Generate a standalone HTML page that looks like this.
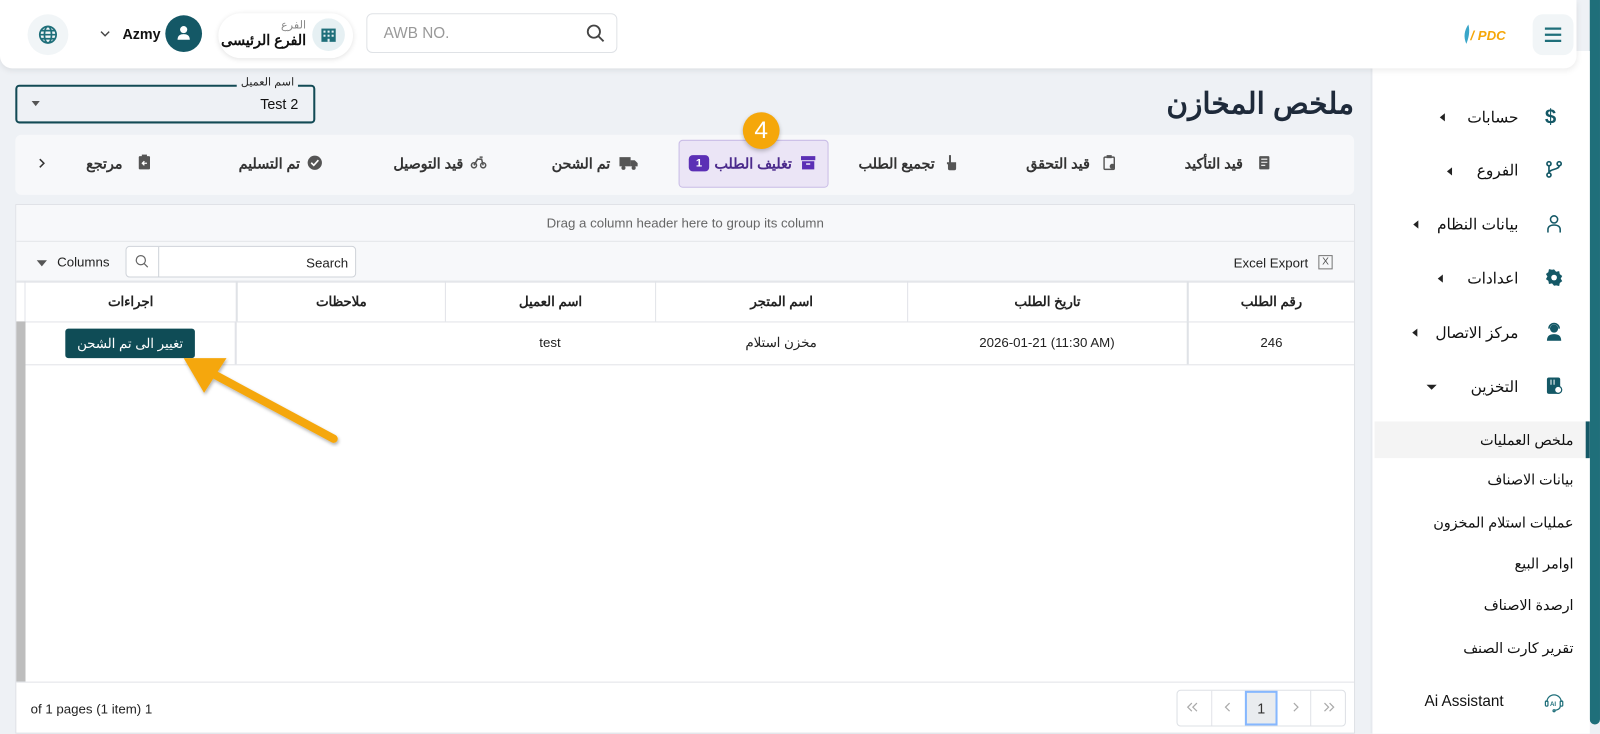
<!DOCTYPE html>
<html><head><meta charset="utf-8">
<style>
*{box-sizing:border-box;margin:0;padding:0}
html,body{width:1600px;height:734px;overflow:hidden;background:#eef1f5}
body{font-family:"Liberation Sans","Noto Sans CJK SC",sans-serif;color:#222}
#w{position:absolute;left:0;top:0;width:1568px;height:719px;transform:scale(1.0204);transform-origin:0 0;background:#eef1f5}
.a{position:absolute}
.ar{direction:rtl;white-space:nowrap}
.hdr{left:0;top:0;width:1545px;height:67px;background:#fff;border-radius:0 0 12px 12px;box-shadow:0 2px 6px rgba(0,0,0,.08);z-index:3}
.side{left:1343px;top:50px;width:215px;height:669px;background:#fff}
.strip{left:1558px;top:0;width:10px;height:710px;background:#1f6f7a;border-radius:0 0 5px 5px}
.si{right:80px;font-size:15px;color:#111}
.sic{left:1514px;width:18px;height:18px}
.tri{width:0;height:0;border-top:4px solid transparent;border-bottom:4px solid transparent;border-right:5px solid #222}
.sub{right:26px;font-size:14px;color:#111}
.tab{font-size:14px;font-weight:bold;color:#333;top:152px}
.th{top:276px;height:39px;font-size:13px;font-weight:bold;text-align:center;line-height:39px;border-left:1px solid #e1e3e8;color:#222}
.td{top:315px;height:42px;font-size:13px;text-align:center;line-height:42px;color:#222}
</style></head><body><div id="w">

<div class="a strip"></div>
<div class="a side"></div>
<div class="a" style="left:1343px;top:67px;width:2px;height:652px;background:#e6e9ee"></div>

<div class="a hdr">
  <div class="a" style="left:1502px;top:14px;width:40px;height:40px;border-radius:10px;background:#f1f5f7"></div>
  <svg class="a" style="left:1512px;top:24px" width="20" height="20" viewBox="0 0 20 20"><path d="M2 4h16M2 10h16M2 16h16" stroke="#1f6f7a" stroke-width="2.2"/></svg>
  <svg class="a" style="left:1430px;top:22px" width="60" height="24" viewBox="0 0 60 24"><path d="M9 2C5 8 4 14 7 21 9 16 11 9 9 2z" fill="#3aa6c9"/><text x="11" y="17" font-family="Liberation Sans" font-weight="bold" font-style="italic" font-size="13" fill="#f5a70a">/ PDC</text></svg>

  <div class="a" style="left:359px;top:13px;width:246px;height:39px;border:1px solid #dfe2e6;border-radius:6px;background:#fff"></div>
  <div class="a" style="left:376px;top:24px;font-size:15px;color:#999">AWB NO.</div>
  <svg class="a" style="left:574px;top:23px" width="20" height="20" viewBox="0 0 20 20"><circle cx="8" cy="8" r="6" fill="none" stroke="#444" stroke-width="1.8"/><path d="M12.5 12.5l5 5" stroke="#444" stroke-width="1.8"/></svg>

  <div class="a" style="left:214px;top:13px;width:132px;height:44px;border-radius:22px;background:#fff;box-shadow:0 1px 5px rgba(0,0,0,.12)"></div>
  <div class="a" style="left:306px;top:18px;width:32px;height:32px;border-radius:50%;background:#e6f0f3"></div>
  <svg class="a" style="left:314px;top:26px" width="16" height="16" viewBox="0 0 16 16"><rect x="1" y="2" width="14" height="13" fill="#1f6f7a"/><g fill="#e6f0f3"><rect x="3" y="4" width="2" height="2"/><rect x="7" y="4" width="2" height="2"/><rect x="11" y="4" width="2" height="2"/><rect x="3" y="8" width="2" height="2"/><rect x="7" y="8" width="2" height="2"/><rect x="11" y="8" width="2" height="2"/><rect x="7" y="12" width="2" height="3"/></g></svg>
  <div class="a ar" style="left:218px;width:82px;text-align:right;top:18px;font-size:11px;color:#888">الفرع</div>
  <div class="a ar" style="left:210px;width:90px;text-align:right;top:31px;font-size:14px;font-weight:bold;color:#111;letter-spacing:-0.3px">الفرع الرئيسى</div>

  <div class="a" style="left:162px;top:15px;width:36px;height:36px;border-radius:50%;background:#145866"></div>
  <svg class="a" style="left:171px;top:23px" width="18" height="18" viewBox="0 0 18 18"><circle cx="9" cy="6" r="3.5" fill="#fff"/><path d="M3 16c0-4 2.5-5.5 6-5.5s6 1.5 6 5.5z" fill="#fff"/></svg>
  <div class="a" style="left:120px;top:25px;font-size:14px;font-weight:bold;color:#111">Azmy</div>
  <svg class="a" style="left:97px;top:28px" width="12" height="10" viewBox="0 0 12 10"><path d="M2 3l4 4 4-4" fill="none" stroke="#444" stroke-width="1.4"/></svg>

  <div class="a" style="left:27px;top:14px;width:40px;height:40px;border-radius:50%;background:#f1f5f7"></div>
  <svg class="a" style="left:37px;top:24px" width="20" height="20" viewBox="0 0 20 20"><g fill="none" stroke="#1f6f7a" stroke-width="1.7"><circle cx="10" cy="10" r="8"/><ellipse cx="10" cy="10" rx="3.5" ry="8"/><path d="M2 10h16M3.5 6h13M3.5 14h13"/></g></svg>
</div>

<!-- sidebar -->
<div class="a ar si" style="top:106px">حسابات</div>
<div class="a tri" style="left:1411px;top:111px"></div>
<div class="a sic" style="top:106px;font-size:20px;font-weight:bold;color:#145866;line-height:18px">$</div>
<div class="a ar si" style="top:158px">الفروع</div>
<div class="a tri" style="left:1418px;top:164px"></div>
<svg class="a sic" style="top:157px" viewBox="0 0 18 18"><g fill="none" stroke="#145866" stroke-width="1.6"><circle cx="4" cy="3.5" r="2"/><circle cx="14" cy="3.5" r="2"/><circle cx="4" cy="14.5" r="2"/><path d="M4 5.5v7M14 5.5c0 4-10 3-10 7"/></g></svg>
<div class="a ar si" style="top:211px">بيانات النظام</div>
<div class="a tri" style="left:1385px;top:216px"></div>
<svg class="a sic" style="top:210px" viewBox="0 0 18 18"><g fill="none" stroke="#145866" stroke-width="1.5"><circle cx="9" cy="5" r="3.5"/><path d="M3 18v-3c0-3 2.5-4.5 6-4.5s6 1.5 6 4.5v3"/></g></svg>
<div class="a ar si" style="top:264px">اعدادات</div>
<div class="a tri" style="left:1409px;top:269px"></div>
<svg class="a sic" style="top:263px" viewBox="0 0 18 18"><path d="M9 1l2 2.3 3-.6.6 3 2.4 1.8-1.5 2.5 1.5 2.5-2.4 1.8-.6 3-3-.6L9 17l-2-2.3-3 .6-.6-3L1 10.5 2.5 8 1 5.5l2.4-1.8.6-3 3 .6z" fill="#145866"/><circle cx="9" cy="9" r="2.8" fill="#fff"/></svg>
<div class="a ar si" style="top:317px">مركز الاتصال</div>
<div class="a tri" style="left:1384px;top:322px"></div>
<svg class="a sic" style="top:316px" viewBox="0 0 18 18"><circle cx="9" cy="6" r="4" fill="#145866"/><path d="M4 6a5 5 0 0110 0" fill="none" stroke="#145866" stroke-width="1.5"/><path d="M2 18c0-5 3-6.5 7-6.5s7 1.5 7 6.5z" fill="#145866"/></svg>
<div class="a ar si" style="top:370px">التخزين</div>
<div class="a" style="left:1398px;top:377px;border-left:5px solid transparent;border-right:5px solid transparent;border-top:5px solid #222"></div>
<svg class="a sic" style="top:369px" viewBox="0 0 18 18"><rect x="2" y="1" width="13" height="16" rx="2" fill="#145866"/><circle cx="13" cy="13" r="3.5" fill="#fff" stroke="#145866" stroke-width="1.2"/><path d="M6 3v5M9 3v5" stroke="#fff" stroke-width="1"/></svg>

<div class="a" style="left:1347px;top:413px;width:208px;height:36px;background:#f4f4f4"></div>
<div class="a" style="left:1554px;top:413px;width:4px;height:36px;background:#145866"></div>
<div class="a ar sub" style="top:423px">ملخص العمليات</div>
<div class="a ar sub" style="top:462px">بيانات الاصناف</div>
<div class="a ar sub" style="top:504px">عمليات استلام المخزون</div>
<div class="a ar sub" style="top:544px">اوامر البيع</div>
<div class="a ar sub" style="top:585px">ارصدة الاصناف</div>
<div class="a ar sub" style="top:627px">تقرير كارت الصنف</div>
<div class="a" style="left:1396px;top:679px;font-size:15px;color:#111">Ai Assistant</div>
<svg class="a" style="left:1513px;top:677px" width="20" height="22" viewBox="0 0 20 22"><g fill="none" stroke="#1f6f7a" stroke-width="1.2"><path d="M3 11a7 7 0 0114 0"/><rect x="1.5" y="10" width="2.5" height="5" rx="1"/><rect x="16" y="10" width="2.5" height="5" rx="1"/><path d="M16 15c0 3-3 4-6 4"/><circle cx="10" cy="19.5" r="1"/></g><text x="6" y="15" font-size="6" font-family="Liberation Sans" fill="#1f6f7a" font-weight="bold">AI</text></svg>

<!-- title -->
<div class="a ar" style="right:241px;top:84px;font-size:29px;font-weight:bold;color:#1e2a3a">ملخص المخازن</div>

<!-- select -->
<div class="a" style="left:15px;top:83px;width:294px;height:38px;border:2px solid #124a55;border-radius:4px"></div>
<div class="a ar" style="left:232px;top:74px;padding:0 4px;background:#eef1f5;font-size:11px;color:#222">اسم العميل</div>
<div class="a" style="left:255px;top:94px;font-size:14px;color:#111">Test 2</div>
<div class="a" style="left:31px;top:99px;border-left:4px solid transparent;border-right:4px solid transparent;border-top:5px solid #555"></div>

<!-- tabs -->
<div class="a" style="left:15px;top:132px;width:1312px;height:59px;background:#f7f8fa;border-radius:6px"></div>
<div class="a" style="left:665px;top:137px;width:147px;height:47px;background:#ebe5f6;border:1px solid #c9bce6;border-radius:4px"></div>
<div class="a ar tab" style="right:350px">قيد التأكيد</div>
<svg class="a" style="left:1233px;top:152px" width="12" height="15" viewBox="0 0 12 15"><rect x="1" y="1" width="10" height="13" rx="1" fill="#555"/><path d="M3 4h6M3 7h6M3 10h4" stroke="#fff" stroke-width="1"/></svg>
<div class="a ar tab" style="right:500px">قيد التحقق</div>
<svg class="a" style="left:1081px;top:151px" width="13" height="16" viewBox="0 0 13 16"><rect x="1" y="3" width="10" height="12" rx="1" fill="none" stroke="#555" stroke-width="1.4"/><rect x="3.5" y="1" width="5" height="3" fill="#555"/><circle cx="9" cy="12" r="2.5" fill="#555"/></svg>
<div class="a ar tab" style="right:652px">تجميع الطلب</div>
<svg class="a" style="left:926px;top:151px" width="12" height="16" viewBox="0 0 12 16"><path d="M4 1h2v7h5v6a2 2 0 01-2 2H5a2 2 0 01-2-2V10H2V8h2z" fill="#555"/></svg>
<div class="a ar tab" style="right:792px;color:#4b2a8c">تغليف الطلب</div>
<div class="a" style="left:675px;top:152px;width:20px;height:16px;border-radius:4px;background:#5b2fb5;color:#fff;font-size:11px;font-weight:bold;text-align:center;line-height:16px">1</div>
<svg class="a" style="left:784px;top:152px" width="16" height="15" viewBox="0 0 16 15"><rect x="1" y="1" width="14" height="4" fill="#5b2fb5"/><rect x="2" y="6" width="12" height="8" fill="#5b2fb5"/><rect x="6" y="8" width="4" height="1.5" fill="#ebe5f6"/></svg>
<div class="a ar tab" style="right:970px">تم الشحن</div>
<svg class="a" style="left:607px;top:153px" width="18" height="14" viewBox="0 0 18 14"><rect x="0" y="1" width="11" height="9" fill="#555"/><path d="M11 4h4l3 3v3h-7z" fill="#555"/><circle cx="4" cy="11.5" r="2" fill="#555"/><circle cx="14" cy="11.5" r="2" fill="#555"/></svg>
<div class="a ar tab" style="right:1114px">قيد التوصيل</div>
<svg class="a" style="left:461px;top:153px" width="16" height="13" viewBox="0 0 16 13"><circle cx="3.5" cy="9" r="2.5" fill="none" stroke="#555" stroke-width="1.5"/><circle cx="12.5" cy="9" r="2.5" fill="none" stroke="#555" stroke-width="1.5"/><path d="M3.5 9L7 3h4l1.5 6M9 1h3" stroke="#555" stroke-width="1.5" fill="none"/></svg>
<div class="a ar tab" style="right:1274px">تم التسليم</div>
<svg class="a" style="left:301px;top:152px" width="15" height="15" viewBox="0 0 15 15"><circle cx="7.5" cy="7.5" r="7" fill="#555"/><path d="M4 7.5l2.5 2.5 4.5-5" stroke="#fff" stroke-width="1.6" fill="none"/></svg>
<div class="a ar tab" style="right:1448px">مرتجع</div>
<svg class="a" style="left:135px;top:151px" width="13" height="16" viewBox="0 0 13 16"><rect x="1" y="2" width="11" height="13" rx="1" fill="#555"/><rect x="4" y="0.5" width="5" height="3" fill="#555"/><path d="M9 9H5M6.5 7L4.5 9l2 2" stroke="#fff" stroke-width="1.3" fill="none"/></svg>
<svg class="a" style="left:36px;top:154px" width="10" height="12" viewBox="0 0 10 12"><path d="M3 2l4 4-4 4" fill="none" stroke="#333" stroke-width="1.5"/></svg>

<div class="a" style="left:728px;top:110px;width:36px;height:36px;border-radius:50%;background:#f5a70a;box-shadow:0 2px 4px rgba(0,0,0,.25);color:#fff;font-size:24px;text-align:center;line-height:36px">4</div>

<!-- grid -->
<div class="a" style="left:15px;top:200px;width:1313px;height:519px;background:#fff;border:1px solid #dde0e5"></div>
<div class="a" style="left:16px;top:201px;width:1311px;height:36px;background:#f7f8fa;border-bottom:1px solid #e1e3e8;text-align:center;line-height:36px;font-size:13px;color:#666">Drag a column header here to group its column</div>
<div class="a" style="left:16px;top:237px;width:1311px;height:39px;background:#f7f8fa;border-bottom:1px solid #e1e3e8"></div>
<div class="a" style="left:1209px;top:250px;font-size:13px;color:#222">Excel Export</div>
<div class="a" style="left:1292px;top:250px;width:14px;height:14px;border:1px solid #777;font-size:10px;text-align:center;line-height:12px;color:#555">X</div>
<div class="a" style="left:36px;top:255px;border-left:5px solid transparent;border-right:5px solid transparent;border-top:6px solid #555"></div>
<div class="a" style="left:56px;top:249px;font-size:13px;color:#222">Columns</div>
<div class="a" style="left:123px;top:241px;width:226px;height:31px;background:#fff;border:1px solid #cfd3d9;border-radius:4px"></div>
<div class="a" style="left:155px;top:242px;width:1px;height:29px;background:#cfd3d9"></div>
<svg class="a" style="left:132px;top:249px" width="14" height="14" viewBox="0 0 14 14"><circle cx="6" cy="6" r="4.5" fill="none" stroke="#666" stroke-width="1.2"/><path d="M9.3 9.3l3.5 3.5" stroke="#666" stroke-width="1.2"/></svg>
<div class="a" style="left:300px;top:250px;font-size:13px;color:#222">Search</div>

<div class="a" style="left:16px;top:276px;width:1311px;height:1px;background:#e1e3e8"></div>
<div class="a" style="left:16px;top:315px;width:1311px;height:1px;background:#e1e3e8"></div>
<div class="a" style="left:16px;top:357px;width:1311px;height:1px;background:#e1e3e8"></div>
<div class="a" style="left:16px;top:315px;width:9px;height:353px;background:#bdbdbd"></div>
<div class="a" style="left:24px;top:276px;width:1px;height:39px;background:#e1e3e8"></div>

<div class="a ar th" style="left:1163px;width:164px;border-left:2px solid #dfe2e6">رقم الطلب</div>
<div class="a ar th" style="left:889px;width:274px">تاريخ الطلب</div>
<div class="a ar th" style="left:642px;width:247px">اسم المتجر</div>
<div class="a ar th" style="left:436px;width:206px">اسم العميل</div>
<div class="a ar th" style="left:231px;width:205px;border-left:2px solid #dfe2e6">ملاحظات</div>
<div class="a ar th" style="left:25px;width:206px;border-left:none">اجراءات</div>

<div class="a td" style="left:1163px;width:164px;border-left:2px solid #dfe2e6">246</div>
<div class="a td" style="left:889px;width:274px">2026-01-21 (11:30 AM)</div>
<div class="a td ar" style="left:642px;width:247px">مخزن استلام</div>
<div class="a td" style="left:436px;width:206px">test</div>
<div class="a td" style="left:230px;width:2px;background:#e1e3e8"></div>
<div class="a ar" style="left:64px;top:322px;width:127px;height:29px;background:#0f4c56;border-radius:3px;color:#fff;font-size:13px;text-align:center;line-height:29px">تغيير الى تم الشحن</div>

<!-- arrow -->
<svg class="a" style="left:170px;top:345px" width="170" height="100" viewBox="0 0 170 100"><defs><filter id="s"><feDropShadow dx="1" dy="2" stdDeviation="1.5" flood-opacity=".3"/></filter></defs><g filter="url(#s)"><path d="M157 85L40 22" stroke="#f5a70a" stroke-width="8" stroke-linecap="round"/><path d="M10 6L52 6 30 40z" fill="#f5a70a"/></g></svg>

<!-- footer -->
<div class="a" style="left:16px;top:668px;width:1311px;height:1px;background:#e1e3e8"></div>
<div class="a" style="left:30px;top:687px;font-size:13px;color:#222">of 1 pages (1 item) 1</div>
<div class="a" style="left:1153px;top:676px;width:166px;height:36px;border:1px solid #dde0e5;border-radius:4px;background:#fff"></div>
<div class="a" style="left:1187px;top:677px;width:1px;height:34px;background:#e1e3e8"></div>
<div class="a" style="left:1284px;top:677px;width:1px;height:34px;background:#e1e3e8"></div>
<div class="a" style="left:1220px;top:677px;width:32px;height:34px;background:#e9ecef;border:2px solid #86b7fe;font-size:14px;text-align:center;line-height:30px;color:#333">1</div>
<svg class="a" style="left:1163px;top:688px" width="12" height="10" viewBox="0 0 12 10"><path d="M5 1L1 5l4 4M10 1L6 5l4 4" fill="none" stroke="#aaa" stroke-width="1.2"/></svg>
<svg class="a" style="left:1200px;top:688px" width="8" height="10" viewBox="0 0 8 10"><path d="M5 1L1 5l4 4" fill="none" stroke="#aaa" stroke-width="1.2"/></svg>
<svg class="a" style="left:1266px;top:688px" width="8" height="10" viewBox="0 0 8 10"><path d="M2 1l4 4-4 4" fill="none" stroke="#aaa" stroke-width="1.2"/></svg>
<svg class="a" style="left:1296px;top:688px" width="12" height="10" viewBox="0 0 12 10"><path d="M2 1l4 4-4 4M7 1l4 4-4 4" fill="none" stroke="#aaa" stroke-width="1.2"/></svg>

</div></body></html>
